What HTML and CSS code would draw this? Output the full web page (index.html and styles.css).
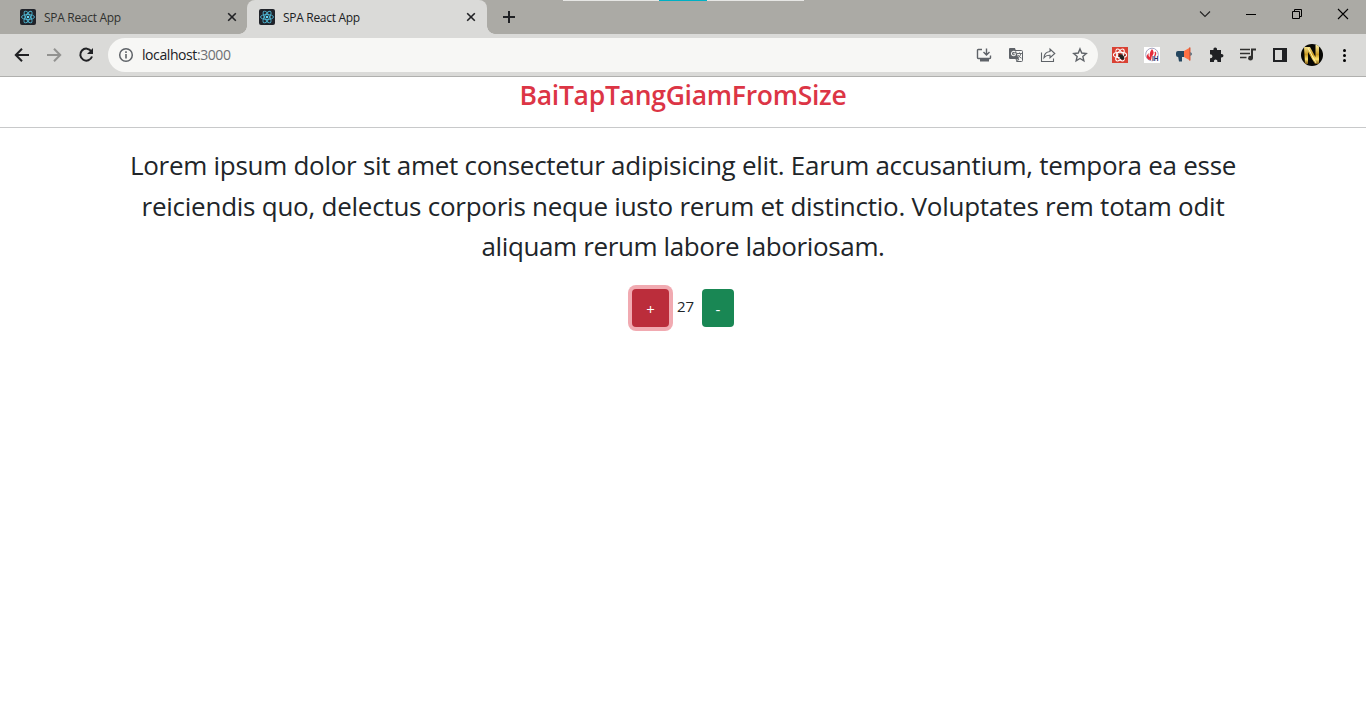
FILE: index.html
```html
<!DOCTYPE html>
<html lang="en">
<head>
<meta charset="utf-8">
<title>SPA React App</title>
<link rel="stylesheet" href="styles.css">
</head>
<body>
<svg class="defs" width="0" height="0">
  <symbol id="react" viewBox="0 0 16 16"><rect width="16" height="16" rx="2" fill="#20232a"/><g fill="none" stroke="#4fb6d2" stroke-width=".9"><ellipse cx="8" cy="8" rx="6.5" ry="2.5"/><ellipse cx="8" cy="8" rx="6.5" ry="2.5" transform="rotate(60 8 8)"/><ellipse cx="8" cy="8" rx="6.5" ry="2.5" transform="rotate(120 8 8)"/></g><circle cx="8" cy="8" r="1.3" fill="#61dafb"/></symbol>
  <symbol id="close" viewBox="0 0 16 16"><path d="M4.2 4.2l7.6 7.6M11.8 4.2l-7.6 7.6" stroke="#202124" stroke-width="1.6"/></symbol>
</svg>
<header class="browser">
  <div class="tabs">
    <div class="tab"><svg width="16" height="16"><use href="#react"/></svg><span class="tab-name">SPA React App</span><svg width="16" height="16"><use href="#close"/></svg></div>
    <div class="tab active"><svg width="16" height="16"><use href="#react"/></svg><span class="tab-name">SPA React App</span><svg width="16" height="16"><use href="#close"/></svg></div>
    <svg class="new-tab" width="14" height="14" viewBox="0 0 14 14"><path d="M7 1v12M1 7h12" stroke="#202124" stroke-width="2"/></svg>
    <div class="window-buttons">
      <svg width="12" height="12" viewBox="0 0 12 12"><path d="M1 3.500l5 5 5-5" fill="none" stroke="#222" stroke-width="1.100"/></svg>
      <svg width="12" height="12" viewBox="0 0 12 12"><path d="M1 6.500h10" stroke="#000"/></svg>
      <svg width="12" height="12" viewBox="0 0 12 12"><path d="M1.500 3.500h7v7h-7zM3.500 3.500v-2h7v7h-2" fill="none" stroke="#000"/></svg>
      <svg width="12" height="12" viewBox="0 0 12 12"><path d="M1 1l10 10M11 1L1 11" stroke="#000" stroke-width="1.100"/></svg>
    </div>
    <div class="loading"><i></i></div>
  </div>
  <div class="toolbar">
    <div class="navigation">
      <svg width="16" height="16" viewBox="0 0 16 16"><path d="M15 8H2M8 1.800L1.800 8 8 14.200" fill="none" stroke="#202124" stroke-width="2"/></svg>
      <svg width="16" height="16" viewBox="0 0 16 16"><path d="M1 8h13M8 1.800L14.200 8 8 14.200" fill="none" stroke="#929290" stroke-width="2"/></svg>
      <svg width="16" height="16" viewBox="0 0 16 16"><path d="M13.300 4.300A6 6 0 1 0 14 9.500" fill="none" stroke="#202124" stroke-width="2"/><path d="M15 1v6H9z" fill="#202124"/></svg>
    </div>
    <div class="address">
      <svg width="16" height="16" viewBox="0 0 16 16"><circle cx="8" cy="8" r="6.300" fill="none" stroke="#5f6368" stroke-width="1.500"/><path d="M8 7v4.400M8 4.300v1.600" stroke="#5f6368" stroke-width="1.600"/></svg>
      <span class="url">localhost<span class="port">:3000</span></span>
      <div class="page-actions">
        <svg width="16" height="16" viewBox="0 0 16 16"><path d="M6 2.500H2.200Q1.500 2.500 1.500 3.200v7.600q0 .7.700.7h11.600q.7 0 .7-.7V8.500M10.500 1.500v6M7.500 5l3 3 3-3" fill="none" stroke="#5f6368" stroke-width="1.400"/><path d="M4 11.500h9v3H4z" fill="#5f6368"/></svg>
        <svg width="16" height="16" viewBox="0 0 16 16"><path d="M7 3.500h6.500q1 0 1 1v9q0 1-1 1h-5" fill="#f7f7f5" stroke="#5f6368"/><path d="M2 1h5l3.700 11H2q-1 0-1-1V2q0-1 1-1z" fill="#5f6368"/><path d="M7.400 5.200A2.200 2.200 0 1 0 7.300 8V6.700H5.300" fill="none" stroke="#f7f7f5" stroke-width="1.100"/><path d="M9 6.500h5M11.500 5.500v1M13 6.500q-.8 3-3 4.300M10 8q1.200 2.300 3.500 3.200M8 12l1 2.500 2-2.500z" fill="none" stroke="#5f6368" stroke-width=".9"/></svg>
        <svg width="16" height="16" viewBox="0 0 16 16"><path d="M1.500 5.500v9h12v-3M4 10.800q.2-5.800 6-6.300V2l4.800 4.500L10 10.700V8.300q-4-.3-6 2.500z" fill="none" stroke="#5f6368" stroke-width="1.100"/></svg>
        <svg width="16" height="16" viewBox="0 0 16 16"><path d="M8 1.900l1.750 4.150 4.500.4-3.400 2.950 1 4.400L8 11.500l-3.850 2.300 1-4.400-3.400-2.950 4.500-.4z" fill="none" stroke="#5f6368" stroke-width="1.400"/></svg>
      </div>
    </div>
    <div class="extensions">
      <svg width="16" height="16" viewBox="0 0 16 16"><rect width="16" height="16" fill="#d94133"/><g fill="none" stroke="#fff" stroke-width="1.100"><ellipse cx="8" cy="8" rx="6.600" ry="2.700"/><ellipse cx="8" cy="8" rx="6.600" ry="2.700" transform="rotate(60 8 8)"/><ellipse cx="8" cy="8" rx="6.600" ry="2.700" transform="rotate(120 8 8)"/></g><ellipse cx="9.700" cy="10" rx="1.900" ry="3.200" transform="rotate(-40 9.700 10)" fill="#222"/><path d="M6 9l6 2M10 6.500l1 6M7.500 12l6-4M6.500 6.500l2 2" stroke="#222" stroke-width=".8"/></svg>
      <svg width="16" height="16" viewBox="0 0 16 16"><rect width="16" height="16" fill="#fff"/><circle cx="8" cy="7.500" r="6.300" fill="none" stroke="#9c9ab9" stroke-width=".9"/><path d="M8 2q3 3.500.500 6.500L8 11 7 13Q4 13.500 3 11 2 8.500 4.500 6q-.5 3 1.500 4Q4.800 6 8 2z" fill="#e52c3b"/><path d="M11 5q1.500 2-.500 4" fill="none" stroke="#e52c3b" stroke-width="1.300"/><path d="M7.500 9.500H16V14H7.500z" fill="#fff"/><text x="8" y="14" class="extension-text">IH</text></svg>
      <svg width="16" height="16" viewBox="0 0 16 16"><path d="M0 6q0-2 2-2h6v6H2q-2 0-2-2zM2 9h4v5.500H3z" fill="#24465f"/><path d="M8 4l6-3.500v13L8 10z" fill="#ff7043"/><path d="M13 .5h1.500v13H13z" fill="#d85d3c"/><path d="M14.500 5q2.500 2 0 4z" fill="#24465f"/></svg>
      <svg width="16" height="16" viewBox="0 0 16 16"><path d="M2 3h3.500Q5 .5 7.200.5T9 3H13v4q2.500-.3 2.500 1.700T13 10.500V15H9.500q.3-2.500-1.800-2.500T6 15H2v-3.800q2.500.2 2.500-1.900T2 7.200z" fill="#202124"/></svg>
      <svg width="16" height="16" viewBox="0 0 16 16"><path d="M0 2.500h10M0 6.500h10M0 10.500h6.500" stroke="#30302f" stroke-width="1.600"/><path d="M12 11V2.500h4" fill="none" stroke="#30302f" stroke-width="2"/><circle cx="10.500" cy="11.200" r="2.400" fill="#30302f"/></svg>
      <svg width="16" height="16" viewBox="0 0 16 16"><path d="M1 1h14v14H1zM3 3v10h7V3z" fill="#202124" fill-rule="evenodd"/></svg>
      <svg class="avatar" width="22" height="22" viewBox="0 0 22 22"><defs><linearGradient id="gold" x1="0" y1="0" x2="0" y2="1"><stop offset="0" stop-color="#fff2a5"/><stop offset=".5" stop-color="#c99a22"/><stop offset=".75" stop-color="#ffe36e"/><stop offset="1" stop-color="#75500d"/></linearGradient><clipPath id="round"><circle cx="11" cy="11" r="11"/></clipPath></defs><g clip-path="url(#round)"><path d="M0 0h22v22H0z" fill="#080805"/><path d="M3 3h6l5.500 10V1H18v19h-4L7 8v12H4z" fill="url(#gold)"/><path d="M7 4l8 15" stroke="#fff5ad"/></g></svg>
      <svg width="16" height="16" viewBox="0 0 16 16"><circle cx="8.500" cy="3.500" r="1.500"/><circle cx="8.500" cy="8.500" r="1.500"/><circle cx="8.500" cy="13.500" r="1.500"/></svg>
    </div>
  </div>
</header>
<main>
  <h3 class="title"><span>BaiTapTangGiamFromSize</span></h3>
  <div class="container">
    <p class="sample"><span class="line-one">Lorem ipsum dolor sit amet consectetur adipisicing elit. Earum accusantium, tempora ea esse</span><span class="line-two">reiciendis quo, delectus corporis neque iusto rerum et distinctio. Voluptates rem totam odit</span><span class="line-three">aliquam rerum labore laboriosam.</span></p>
    <div class="controls"><button class="increase">+</button><span class="size">27</span><button class="decrease">-</button></div>
  </div>
</main>
</body>
</html>
```
FILE: styles.css
```css
* { box-sizing: border-box; }
body { margin: 0; height: 728px; overflow: hidden; background: #fff; color: #212529; font-family: "Open Sans", "Noto Sans", sans-serif; }
svg { display: block; flex-shrink: 0; }
.defs { position: absolute; }
.tabs { position: relative; height: 34px; display: flex; background: #abaaa5; }
.tab { width: 240px; height: 34px; padding: 0 8px 0 12px; display: flex; align-items: center; gap: 8px; font-size: 12px; color: #30312f; }
.tab:first-child { width: 247px; padding: 0 7px 0 20px; }
.tab-name { flex: 1; letter-spacing: -.3px; }
.active { position: relative; background: #dadad8; border-radius: 8px 8px 0 0; color: #202124; }
.active::before, .active::after { content: ""; position: absolute; bottom: 0; width: 8px; height: 8px; }
.active::before { left: -8px; background: radial-gradient(circle at 0 0, transparent 7.5px, #dadad8 8px); }
.active::after { right: -8px; background: radial-gradient(circle at 100% 0, transparent 7.5px, #dadad8 8px); }
.new-tab { margin: 10px 0 0 15px; }
.window-buttons { margin: 8px 17px 0 auto; display: flex; gap: 34px; }
.loading { position: absolute; top: 0; left: 563px; width: 241px; height: 1px; background: #e6e6e4; display: flex; padding-left: 96px; }
.loading i { width: 48px; background: #00b0c4; }
.toolbar { height: 43px; padding: 4px 14px 4px; background: #dadad8; border-bottom: 1px solid #b0b0ae; display: flex; align-items: center; }
.navigation { width: 94px; display: flex; gap: 16px; }
.address { width: 990px; height: 34px; padding: 0 10px; border-radius: 17px; background: #f7f7f5; display: flex; align-items: center; gap: 8px; }
.url { padding-bottom: 1px; font-size: 14px; letter-spacing: -.42px; color: #202124; }
.port { color: #6d7074; }
.page-actions { margin-left: auto; display: flex; gap: 16px; }
.extensions { margin-left: 14px; display: flex; align-items: center; gap: 16px; }
.avatar { margin: 0 -3px; }
.extension-text { font: bold 6.5px "Liberation Sans", sans-serif; fill: #272764; }
.title { height: 51px; margin: 0; border-bottom: 1px solid #c8c9ca; text-align: center; color: #dc3545; font-size: 26.5px; line-height: 37px; font-weight: 580; letter-spacing: -.28px; }
.container { width: 1140px; margin: 0 auto; padding-top: 17px; }
.sample { margin: 0; display: flex; flex-direction: column; align-items: center; font-size: 26px; line-height: 40.5px; font-weight: 380; white-space: nowrap; }
.line-one { letter-spacing: -.28px; }
.line-two { letter-spacing: -.25px; line-height: 40px; }
.line-three { letter-spacing: -.37px; line-height: 41px; }
.controls { margin: 22px 0 0 64px; height: 40px; display: flex; justify-content: center; padding-right: 64px; font-size: 15px; line-height: 35px; }
button { height: 38px; padding: 0; border: 0; border-radius: 4px; font: 15px/40px "Open Sans", sans-serif; color: #fff; }
.increase { width: 37px; background: #bb2d3b; box-shadow: 0 0 0 4px #f1aab1; }
.size { width: 33px; text-align: center; }
.decrease { width: 32px; padding-bottom: 2px; background: #198754; }
```
